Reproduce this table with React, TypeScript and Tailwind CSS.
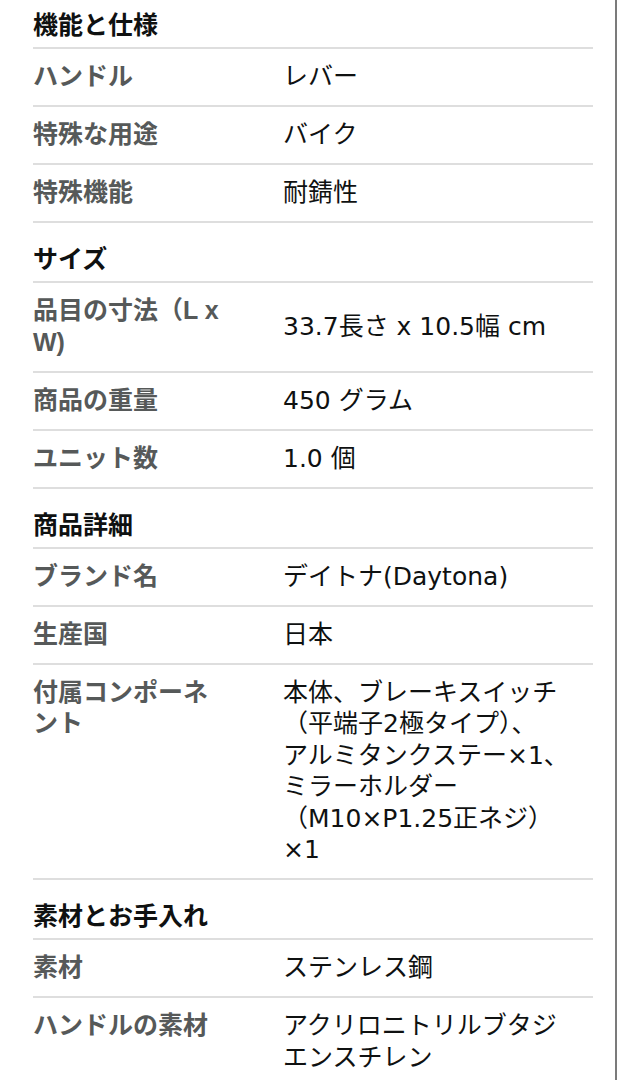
const sections: { title: string; rows: [string, string][] }[] = [
  {
    title: "機能と仕様",
    rows: [
      ["ハンドル", "レバー"],
      ["特殊な用途", "バイク"],
      ["特殊機能", "耐錆性"],
    ],
  },
  {
    title: "サイズ",
    rows: [
      ["品目の寸法（L x W)", "33.7長さ x 10.5幅 cm"],
      ["商品の重量", "450 グラム"],
      ["ユニット数", "1.0 個"],
    ],
  },
  {
    title: "商品詳細",
    rows: [
      ["ブランド名", "デイトナ(Daytona)"],
      ["生産国", "日本"],
      [
        "付属コンポーネント",
        "本体、ブレーキスイッチ（平端子2極タイプ）、アルミタンクステー×1、ミラーホルダー（M10×P1.25正ネジ）×1",
      ],
    ],
  },
  {
    title: "素材とお手入れ",
    rows: [
      ["素材", "ステンレス鋼"],
      ["ハンドルの素材", "アクリロニトリルブタジエンスチレン"],
    ],
  },
];

export default function App() {
  return (
    <div
      className="h-[1080px] w-full overflow-hidden bg-white border-r-2 border-[#7b7b7b] pl-[33px]"
      style={{ fontFamily: '"Liberation Sans", "Noto Sans CJK JP", sans-serif' }}
    >
      <div className="w-[560px]">
        {sections.map((s, i) => (
          <div key={s.title}>
            <h2
              className={
                "border-b-2 border-[#dedede] text-[25px] leading-[30px] font-bold text-[#0f1111] pb-[7px] " +
                (i === 0 ? "pt-[10px]" : "pt-[21px]")
              }
            >
              {s.title}
            </h2>
            {s.rows.map(([label, value]) => (
              <div key={label} className="flex border-b-2 border-[#dedede] py-[12.25px] text-[25px] leading-[31.5px]">
                <div className="w-[250px] shrink-0 pr-[58px] self-start font-bold text-[#565959]">{label}</div>
                <div
                  className="w-[290px] self-center text-[#0f1111] break-keep [overflow-wrap:anywhere] font-['DejaVu_Sans','Noto_Sans_CJK_JP',sans-serif]"
                >
                  {value}
                </div>
              </div>
            ))}
          </div>
        ))}
      </div>
    </div>
  );
}
